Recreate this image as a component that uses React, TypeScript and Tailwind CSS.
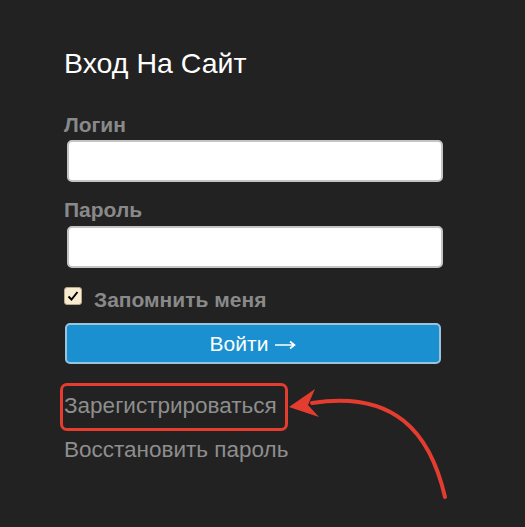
import React from 'react';

const App = () => {
    return (
        <div className="relative w-[525px] h-[527px] bg-[#222222] overflow-hidden font-['Liberation_Sans',Arial,sans-serif]">
            <div className="pl-[64px] pt-[47px] w-[445px]">
                <h1 className="text-[28.5px] leading-[32px] text-white">Вход На Сайт</h1>

                {/* Login */}
                <label className="block mt-[34px] text-[21px] leading-[24px] font-bold text-[#898989]">Логин</label>
                <input
                    type="text"
                    className="block mt-[3px] ml-[3px] w-[376px] h-[42px] bg-white rounded-[5px] border-2 border-[#c4c4c4] outline-none"
                />

                {/* Password */}
                <label className="block mt-[16px] text-[21px] leading-[24px] font-bold text-[#898989]">Пароль</label>
                <input
                    type="password"
                    className="block mt-[4px] ml-[3px] w-[376px] h-[42px] bg-white rounded-[5px] border-2 border-[#c4c4c4] outline-none"
                />

                {/* Remember me */}
                <div className="flex items-start mt-[19px]">
                    <span className="w-[18px] h-[18px] rounded-[3px] bg-[#f8ebd0] border border-[#b9a888] flex items-center justify-center">
                        <svg width="12" height="12" viewBox="0 0 12 12">
                            <path d="M1.5 6.5 L4.5 9.5 L10.5 2" fill="none" stroke="#000" strokeWidth="2" />
                        </svg>
                    </span>
                    <span className="ml-[12px] mt-[1px] text-[21px] leading-[24px] font-bold text-[#898989]">Запомнить меня</span>
                </div>

                <button className="flex items-center justify-center gap-[7px] mt-[11px] ml-[1px] w-[376px] h-[41px] rounded-[5px] bg-[#1a90d1] border-2 border-[#9cc3dc] text-white text-[21px] leading-none">
                    <span>Войти</span>
                    <svg width="21" height="10" viewBox="0 0 21 10" className="mt-[2px]">
                        <path d="M0 5 H19 M15 1.5 L19.5 5 L15 8.5" fill="none" stroke="#fff" strokeWidth="1.6" />
                    </svg>
                </button>

                {/* Register link, highlighted */}
                <div className="mt-[19px] inline-block pl-[1px] pr-[8px] pt-[7px] pb-[9px] -ml-[4px] border-[3px] border-[#e53c30] rounded-[7px]">
                    <a className="block text-[22.5px] leading-[26px] text-[#8e8e8e]">Зарегистрироваться</a>
                </div>
                <a className="block mt-[6px] text-[22.5px] leading-[26px] text-[#8e8e8e]">Восстановить пароль</a>
            </div>

            {/* Annotation arrow */}
            <svg className="absolute left-0 top-0" width="525" height="527" viewBox="0 0 525 527">
                <path d="M445 497 C 430 432, 394 390, 312 403" fill="none" stroke="#e53c30" strokeWidth="4" strokeLinecap="round" />
                <path d="M289 407 L315 389 L308 405 L319 417 Z" fill="#e53c30" />
            </svg>
        </div>
    );
};

export default App;
